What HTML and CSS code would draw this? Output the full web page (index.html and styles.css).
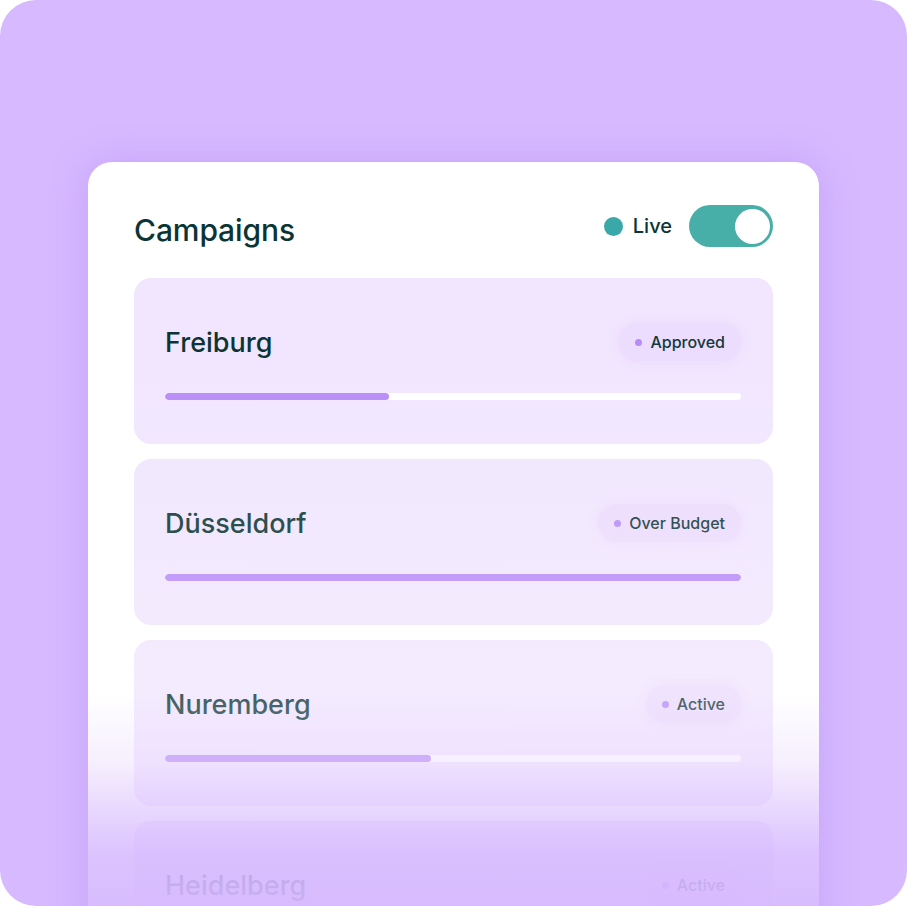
FILE: index.html
```html
<!DOCTYPE html>
<html>
<head>
<meta charset="utf-8">
<link rel="stylesheet" href="styles.css">
</head>
<body>
<div class="frame">
  <div class="card">
    <div class="header">
      <h1 class="title">Campaigns</h1>
      <div class="live">
        <span class="live-dot"></span>
        <span class="live-text">Live</span>
        <span class="toggle"><span class="knob"></span></span>
      </div>
    </div>
    <div class="rows">
      <div class="row">
        <div class="row-top">
          <span class="city">Freiburg</span>
          <span class="badge"><span class="bdot"></span>Approved</span>
        </div>
        <div class="track"><div class="fill" style="width:38.9%"></div></div>
      </div>
      <div class="row">
        <div class="row-top">
          <span class="city">Düsseldorf</span>
          <span class="badge"><span class="bdot"></span>Over Budget</span>
        </div>
        <div class="track"><div class="fill" style="width:100%"></div></div>
      </div>
      <div class="row">
        <div class="row-top">
          <span class="city">Nuremberg</span>
          <span class="badge"><span class="bdot"></span>Active</span>
        </div>
        <div class="track"><div class="fill" style="width:46.2%"></div></div>
      </div>
      <div class="row">
        <div class="row-top">
          <span class="city">Heidelberg</span>
          <span class="badge"><span class="bdot"></span>Active</span>
        </div>
        <div class="track"><div class="fill" style="width:60%"></div></div>
      </div>
    </div>
    <div class="fade"></div>
  </div>
</div>
</body>
</html>
```

FILE: styles.css
```css
* { box-sizing: border-box; }
html, body { margin: 0; padding: 0; background: #ffffff; }
body { font-family: Inter, "Liberation Sans", sans-serif; }

.frame {
  width: 907px;
  height: 906px;
  border-radius: 36px;
  background: #d6b9fe;
  overflow: hidden;
  padding: 162px 0 0 88px;
}

.card {
  position: relative;
  width: 731px;
  height: 800px;
  background: #ffffff;
  border-radius: 24px;
  padding: 43px 46px 0 46px;
  box-shadow: 0 0 36px rgba(170, 120, 245, 0.35);
  overflow: hidden;
}

.header {
  display: flex;
  align-items: center;
  justify-content: space-between;
  height: 42px;
}

.title {
  margin: 0;
  font-size: 30px;
  font-weight: 500;
  color: #0b3534;
  letter-spacing: -0.1px;
  padding-top: 8px;
}

.live {
  display: flex;
  align-items: center;
}

.live-dot {
  width: 19px;
  height: 19px;
  border-radius: 50%;
  background: #3aa8a8;
  margin-right: 10px;
}

.live-text {
  font-size: 20px;
  font-weight: 500;
  color: #0b3534;
  margin-right: 17px;
}

.toggle {
  width: 84px;
  height: 42px;
  border-radius: 21px;
  background: #48afa8;
  display: flex;
  align-items: center;
  justify-content: flex-end;
  padding-right: 3px;
}

.knob {
  width: 35px;
  height: 35px;
  border-radius: 50%;
  background: #ffffff;
}

.rows {
  margin-top: 31px;
  display: flex;
  flex-direction: column;
  gap: 15px;
}

.row {
  height: 166px;
  background: #f1e6fe;
  border-radius: 17px;
  padding: 45px 32px 0 31px;
}

.row-top {
  display: flex;
  align-items: center;
  justify-content: space-between;
  height: 38px;
}

.city {
  font-size: 27px;
  font-weight: 500;
  color: #0b3534;
}

.badge {
  display: flex;
  align-items: center;
  height: 38px;
  padding: 0 16px 0 16px;
  border-radius: 19px;
  background: #ecdcfd;
  box-shadow: 0 0 8px 2px rgba(236, 220, 253, 0.9);
  font-size: 16px;
  font-weight: 500;
  color: #12393a;
}

.bdot {
  width: 7px;
  height: 7px;
  border-radius: 50%;
  background: #b68cf8;
  margin-right: 8px;
}

.track {
  margin-top: 32px;
  height: 7px;
  border-radius: 4px;
  background: #ffffff;
  overflow: hidden;
}

.fill {
  height: 100%;
  border-radius: 4px;
  background: #b88cf8;
}

.fade {
  position: absolute;
  left: 0;
  right: 0;
  top: 0;
  bottom: 0;
  pointer-events: none;
  background: linear-gradient(
    to bottom,
    rgba(255, 255, 255, 0) 0px,
    rgba(255, 255, 255, 0) 200px,
    rgba(255, 255, 255, 0.13) 360px,
    rgba(255, 255, 255, 0.2) 530px,
    rgba(236, 220, 254, 0.45) 600px,
    rgba(214, 185, 254, 0.85) 690px,
    rgba(214, 185, 254, 0.95) 744px
  );
}
```
